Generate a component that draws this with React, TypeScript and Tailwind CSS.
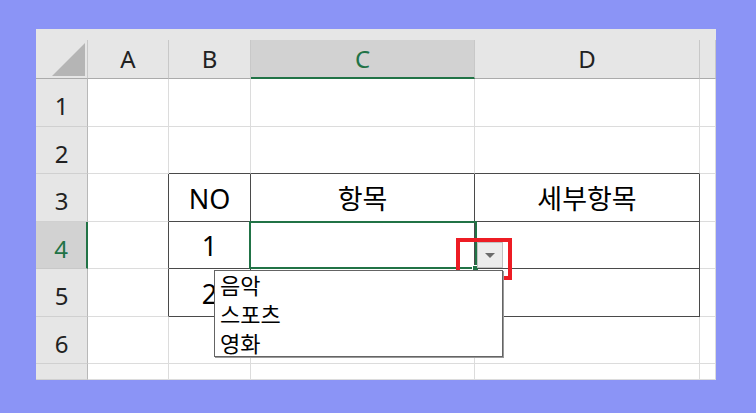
import React from 'react';

const COLS = ['', 'A', 'B', 'C', 'D', ''];
const ROWS = ['1', '2', '3', '4', '5', '6', ''];

const CELLS: Record<string, string> = {
  '3-2': 'NO',
  '3-3': '항목',
  '3-4': '세부항목',
  '4-2': '1',
  '5-2': '2',
};

const OPTIONS = ['음악', '스포츠', '영화'];

function inTable(r: number, c: number) {
  return r >= 3 && r <= 5 && c >= 2 && c <= 4;
}

function BodyCell({ r, c }: { r: number; c: number }) {
  const text = CELLS[`${r}-${c}`];
  // table B3:D5 gets dark borders; neighbours draw its left and top edges
  const right = inTable(r, c) || (r >= 3 && r <= 5 && c === 1) ? 'border-r-[#4a4a4a]' : 'border-r-[#dcdcdc]';
  const bottom = inTable(r, c) || (r === 2 && c >= 2 && c <= 4) ? 'border-b-[#4a4a4a]' : 'border-b-[#dcdcdc]';
  return (
    <div className={`bg-white border-r border-b ${right} ${bottom} flex items-center justify-center pt-[3px] text-[27px] text-black overflow-hidden`}>
      {text}
    </div>
  );
}

export default function App() {
  return (
    <div className="w-[756px] h-[413px] bg-[#8b94f6] pl-[36px] pt-[29px] font-['Noto_Sans','Noto_Sans_CJK_KR',sans-serif]">
      <div className="relative w-[680px] h-[351px] bg-white overflow-hidden">
        {/* strip above the column headers */}
        <div className="h-[11px] bg-[#e6e6e6]" />

        <div className="grid grid-cols-[52px_81px_82px_224px_225px_16px] grid-rows-[39px_48px_47px_48px_47px_48px_47px_16px]">
          {/* column headers */}
          {COLS.map((label, c) =>
            c === 0 ? (
              <div key="corner" className="relative bg-[#e6e6e6] border-r border-r-[#c8c8c8] border-b border-b-[#ababab]">
                <svg className="absolute left-[16px] top-[3px]" width="34" height="34" viewBox="0 0 34 34">
                  <polygon points="33,0 33,33 0,33" fill="#b5b5b5" />
                </svg>
              </div>
            ) : c === 3 ? (
              <div
                key={c}
                className="bg-[#d2d2d2] border-r border-r-[#c8c8c8] border-b-2 border-b-[#217346] flex items-center justify-center text-[24px] text-[#217346]"
              >
                {label}
              </div>
            ) : (
              <div
                key={c}
                className="bg-[#e6e6e6] border-r border-r-[#c8c8c8] border-b border-b-[#ababab] flex items-center justify-center text-[24px] text-[#222]"
              >
                {label}
              </div>
            ),
          )}

          {ROWS.map((num, i) => {
            const r = i + 1;
            return (
              <React.Fragment key={r}>
                {r === 4 ? (
                  <div className="bg-[#d2d2d2] border-b border-b-[#c8c8c8] border-r-2 border-r-[#217346] flex items-center justify-center pt-[7px] text-[24px] text-[#217346]">
                    {num}
                  </div>
                ) : (
                  <div className="bg-[#e6e6e6] border-b border-b-[#d0d0d0] border-r border-r-[#b8b8b8] flex items-center justify-center pt-[7px] text-[24px] text-[#222]">
                    {num}
                  </div>
                )}
                {[1, 2, 3, 4, 5].map(c => (
                  <BodyCell key={c} r={r} c={c} />
                ))}
              </React.Fragment>
            );
          })}
        </div>

        {/* active cell C4 */}
        <div className="absolute left-[213px] top-[192px] w-[228px] h-[48px] border-2 border-[#217346]" />
        <div className="absolute left-[436px] top-[236px] w-[6px] h-[5px] bg-[#217346] border-l border-t border-white" />

        {/* dropdown button */}
        <div className="absolute left-[441px] top-[213px] w-[26px] h-[26px] bg-[#ececec] border border-[#c2c2c2] flex items-center justify-center">
          <div className="w-0 h-0 border-x-[5px] border-x-transparent border-t-[5px] border-t-[#6b6b6b]" />
        </div>

        {/* red highlight */}
        <div className="absolute left-[420px] top-[209px] w-[56px] h-[42px] border-4 border-[#ed1c24]" />

        {/* list */}
        <div className="absolute left-[178px] top-[241px] w-[289px] h-[87px] bg-white border border-[#646464] shadow-[1px_1px_0_#9a9a9a] flex flex-col">
          {OPTIONS.map(o => (
            <div key={o} className="h-[29px] pl-[5px] flex items-center text-[22px] text-black">
              {o}
            </div>
          ))}
        </div>
      </div>
    </div>
  );
}
